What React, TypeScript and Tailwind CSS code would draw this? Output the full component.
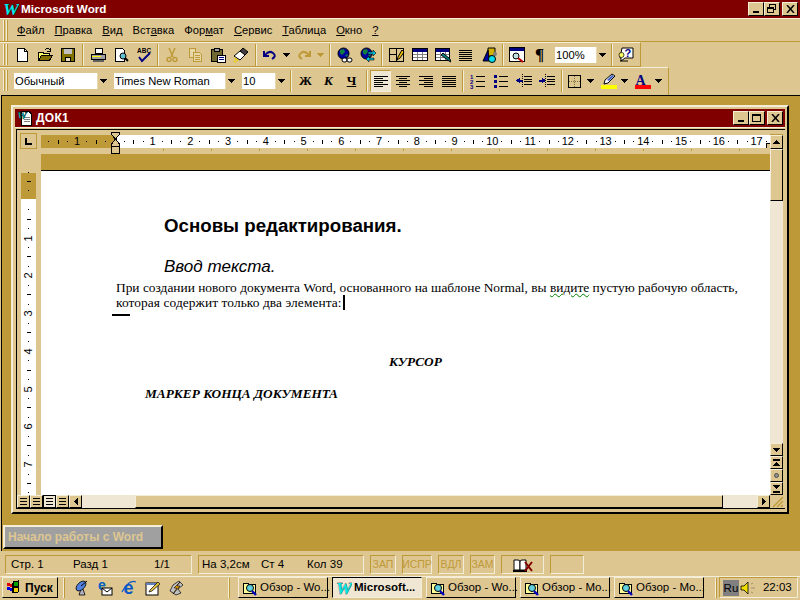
import React from "react";

type P = { children?: React.ReactNode; w?: number; h?: number; crisp?: boolean };
const S = ({ children, w = 16, h = 16, crisp = true }: P) => (
  <svg width={w} height={h} viewBox={`0 0 ${w} ${h}`} shapeRendering={crisp ? "crispEdges" : "auto"} className="block shrink-0">
    {children}
  </svg>
);
const K = "#000";
const Lines = ({ rows }: { rows: [number, number, number][] }) => (
  <S>
    {rows.map(([x, y, w], i) => (
      <rect key={i} x={x} y={y} width={w} height={1} fill={K} />
    ))}
  </S>
);

const NewDoc = () => <S><path d="M3 1.5H10.5L13.5 4.5V14.5H3.5V1.5Z" fill="#fff" stroke="#000" /><path d="M10.5 1.5V4.5H13.5" fill="none" stroke="#000" /></S>;
const OpenF = () => (
  <S>
    <path d="M1.5 5.5H6L7 6.5H12.5V13.5H1.5Z" fill="#ffff66" stroke="#000" />
    <path d="M1.5 13.5L4.5 8.5H15.5L12.5 13.5Z" fill="#847000" stroke="#000" />
    <path d="M8 3Q11 0 13 3M13 1V4H10" fill="none" stroke="#000" />
  </S>
);
const Save = () => (
  <S>
    <rect x="1.5" y="1.5" width="13" height="13" fill="#807000" stroke="#000" />
    <rect x="4" y="2" width="8" height="5" fill="#c0c0c0" />
    <rect x="5.5" y="10.5" width="5" height="4" fill="#e8e0c0" stroke="#000" />
  </S>
);
const Printer = () => (
  <S>
    <path d="M5.5 1.5H12.5V6.5H5.5Z" fill="#fff" stroke="#000" />
    <path d="M1.5 7.5H15.5V12.5H1.5Z" fill="#a0a0a0" stroke="#000" />
    <rect x="2" y="9" width="9" height="1" fill="#ffff00" />
    <rect x="3" y="13" width="11" height="2" fill="#606060" />
  </S>
);
const Preview = () => (
  <S>
    <path d="M2.5 1.5H9.5L11.5 3.5V14.5H2.5Z" fill="#fff" stroke="#000" />
    <circle cx="10" cy="9" r="3" fill="#60c0d0" stroke="#000" shapeRendering="auto" />
    <path d="M12 11L15 14" stroke="#000" strokeWidth="2" shapeRendering="auto" />
  </S>
);
const Spell = () => (
  <S>
    <text x="1" y="6" fontSize="6.5" fontWeight="700" fontFamily="Liberation Sans, sans-serif" fill="#000">ABC</text>
    <path d="M3 10L6 14L14 6" fill="none" stroke="#000080" strokeWidth="2" shapeRendering="auto" />
  </S>
);
const Cut = () => (
  <S crisp={false}>
    <path d="M5 1L9 10M11 1L7 10" stroke="#BE9938" strokeWidth="1.5" fill="none" />
    <circle cx="5" cy="12.5" r="2" fill="none" stroke="#BE9938" strokeWidth="1.4" />
    <circle cx="11" cy="12.5" r="2" fill="none" stroke="#BE9938" strokeWidth="1.4" />
  </S>
);
const Copy = () => (
  <S>
    <path d="M2.5 1.5H8.5V10.5H2.5Z" fill="#e8d8a8" stroke="#BE9938" />
    <path d="M6.5 5.5H12.5L14.5 7.5V14.5H6.5Z" fill="#e8d8a8" stroke="#BE9938" />
    <path d="M8 8.5H13M8 10.5H13M8 12.5H13" stroke="#BE9938" />
  </S>
);
const Paste = () => (
  <S>
    <rect x="1.5" y="2.5" width="11" height="12" fill="#706830" stroke="#000" />
    <rect x="4.5" y="1.5" width="5" height="3" fill="#a0a0a0" stroke="#000" />
    <path d="M7.5 8.5H15.5V15.5H7.5Z" fill="#fff" stroke="#000" />
    <rect x="9" y="10" width="5" height="1" fill="#000080" />
    <rect x="9" y="12" width="5" height="1" fill="#000080" />
  </S>
);
const Brush = () => (
  <S crisp={false}>
    <path d="M10 1L15 5L12 8L7 4Z" fill="#404040" stroke="#000" />
    <path d="M7 4L12 8L7 13L1 9Z" fill="#fff" stroke="#000" />
    <path d="M2 11L5 14M1 14L3 15" stroke="#e8d000" strokeWidth="1.5" />
  </S>
);
const Undo = ({ c = "#000080" }: { c?: string }) => (
  <S crisp={false}>
    <path d="M2 4V9H7" fill="none" stroke={c} strokeWidth="2" />
    <path d="M3 8Q7 3 11 6T10 12" fill="none" stroke={c} strokeWidth="2" />
  </S>
);
const Redo = () => (
  <S crisp={false}>
    <path d="M14 4V9H9" fill="none" stroke="#BE9938" strokeWidth="2" />
    <path d="M13 8Q9 3 5 6T6 12" fill="none" stroke="#BE9938" strokeWidth="2" />
  </S>
);
const Globe = () => (
  <>
    <circle cx="6.5" cy="6.5" r="5.5" fill="#0000a0" stroke="#000" />
    <path d="M3 3L7 2L8 5L5 8L3 6ZM8 8L11 7L10 10Z" fill="#108040" />
  </>
);
const WebLink = () => (
  <S crisp={false}>
    <Globe />
    <rect x="5" y="11" width="5" height="4" rx="2" fill="#fff" stroke="#000" />
    <rect x="10" y="11" width="5" height="4" rx="2" fill="#fff" stroke="#000" />
  </S>
);
const WebArrows = () => (
  <S crisp={false}>
    <Globe />
    <path d="M8 5H13V3L16 6L13 9V7H8Z" fill="#00c0e0" stroke="#000" strokeWidth=".6" />
    <path d="M14 11H9V9L6 12L9 15V13H14Z" fill="#00c0e0" stroke="#000" strokeWidth=".6" />
  </S>
);
const TableDraw = () => (
  <S>
    <rect x="0.5" y="1.5" width="14" height="13" fill="none" stroke="#000" />
    <path d="M7.5 1V15M1 7.5H8" stroke="#000" />
    <path d="M13 3L9 10L8 13L11 11L15 5Z" fill="#f0c000" stroke="#000" shapeRendering="auto" />
  </S>
);
const TableI = () => (
  <S>
    <rect x="0.5" y="1.5" width="15" height="12" fill="#fff" stroke="#000" />
    <rect x="1" y="2" width="14" height="3" fill="#000080" />
    <path d="M1 7.5H15M1 10.5H15M5.5 5V13M10.5 5V13" stroke="#808080" />
  </S>
);
const XlIns = () => (
  <S>
    <rect x="0.5" y="1.5" width="14" height="12" fill="#fff" stroke="#000" />
    <rect x="1" y="2" width="13" height="3" fill="#000080" />
    <path d="M1 7.5H14M1 10.5H14M5.5 5V13M10 5V13" stroke="#808080" />
    <path d="M6 8L14 14L16 15L15 12L8 6Z" fill="#008080" stroke="#000" shapeRendering="auto" />
  </S>
);
const Columns = () => (
  <Lines rows={[[1, 3, 13], [1, 5, 13], [1, 7, 13], [1, 9, 13], [1, 11, 13], [1, 13, 13]]} />
);
const Drawing = () => (
  <S crisp={false}>
    <path d="M7 1H14V9H7Z" fill="#d0b000" stroke="#000" />
    <path d="M7 3L2 14H8Z" fill="#0000a0" stroke="#000" />
    <circle cx="11" cy="12" r="3.5" fill="#00e0f0" stroke="#000" />
    <circle cx="14" cy="7" r="2" fill="#808080" />
  </S>
);
const MapI = () => (
  <S>
    <rect x="0.5" y="0.5" width="15" height="14" fill="#fff" stroke="#000" />
    <rect x="1" y="1" width="14" height="3" fill="#000080" />
    <circle cx="7" cy="9" r="3" fill="#c0e0e0" stroke="#000" shapeRendering="auto" />
    <path d="M9 11L14 15" stroke="#c00000" strokeWidth="2" shapeRendering="auto" />
  </S>
);
const Help = () => (
  <S crisp={false}>
    <path d="M4 1H15V11H7L3 14V11H2Z" fill="#fff" stroke="#000" />
    <text x="6.5" y="10" fontSize="11" fontWeight="700" fontFamily="Liberation Sans, sans-serif" fill="#000080">?</text>
    <circle cx="3.5" cy="8" r="2.5" fill="#ffff60" stroke="#000" strokeWidth=".7" />
    <path d="M2 14H10" stroke="#000" />
  </S>
);
const AlignL = () => <Lines rows={[[1, 3, 14], [1, 5, 9], [1, 7, 14], [1, 9, 9], [1, 11, 14], [1, 13, 9]]} />;
const AlignC = () => <Lines rows={[[1, 3, 14], [4, 5, 8], [1, 7, 14], [4, 9, 8], [1, 11, 14], [4, 13, 8]]} />;
const AlignR = () => <Lines rows={[[1, 3, 14], [6, 5, 9], [1, 7, 14], [6, 9, 9], [1, 11, 14], [6, 13, 9]]} />;
const AlignJ = () => <Lines rows={[[1, 3, 14], [1, 5, 14], [1, 7, 14], [1, 9, 14], [1, 11, 14], [1, 13, 14]]} />;
const Numbered = () => (
  <S>
    <text x="0" y="6" fontSize="6" fontWeight="700" fill="#000080" fontFamily="Liberation Sans, sans-serif">1</text>
    <text x="0" y="11" fontSize="6" fontWeight="700" fill="#000080" fontFamily="Liberation Sans, sans-serif">2</text>
    <text x="0" y="16" fontSize="6" fontWeight="700" fill="#000080" fontFamily="Liberation Sans, sans-serif">3</text>
    <path d="M6 3.5H15M6 8.5H15M6 13.5H15" stroke="#000" />
  </S>
);
const Bullets = () => (
  <S>
    <rect x="1" y="2" width="3" height="3" fill="#000080" />
    <rect x="1" y="7" width="3" height="3" fill="#000080" />
    <rect x="1" y="12" width="3" height="3" fill="#000080" />
    <path d="M6 3.5H15M6 8.5H15M6 13.5H15" stroke="#000" />
  </S>
);
const Outdent = () => (
  <S>
    <path d="M0 7.5L4 4.5V10.5Z" fill="#000080" />
    <path d="M4 6.5H7V8.5H4Z" fill="#000080" />
    <path d="M8 3.5H16M8 6.5H16M8 8.5H16M8 11.5H16" stroke="#000" />
    <path d="M6 1V15" stroke="#000" strokeDasharray="1 1" />
  </S>
);
const Indent = () => (
  <S>
    <path d="M7 7.5L3 4.5V10.5Z" fill="#000080" />
    <path d="M0 6.5H3V8.5H0Z" fill="#000080" />
    <path d="M8 3.5H16M8 6.5H16M8 8.5H16M8 11.5H16" stroke="#000" />
    <path d="M6 1V15" stroke="#000" strokeDasharray="1 1" />
  </S>
);
const BorderI = () => (
  <S>
    <rect x="1.5" y="2.5" width="12" height="12" fill="none" stroke="#000" />
    <path d="M7.5 3V14M2 8.5H13" stroke="#807040" strokeDasharray="1 1" />
  </S>
);
const Highlight = () => (
  <S>
    <path d="M11 1L14 3L7 10L3 11L4 7Z" fill="#fff" stroke="#000" shapeRendering="auto" />
    <path d="M11 2L13 3L8 8L6 7Z" fill="#4060c0" shapeRendering="auto" />
    <rect x="0" y="12" width="16" height="4" fill="#ffff00" />
  </S>
);
const FontColor = () => (
  <S>
    <text x="0.5" y="12" fontSize="14" fontWeight="700" fontFamily="Liberation Serif, serif" fill="#000080">A</text>
    <rect x="0" y="12" width="16" height="4" fill="#ff0000" />
  </S>
);
const FolderSearch = () => (
  <S>
    <path d="M1.5 3.5H6L7 4.5H13.5V13.5H1.5Z" fill="#ffff99" stroke="#000" />
    <circle cx="8" cy="8" r="3.5" fill="#60d0e0" stroke="#000" shapeRendering="auto" />
    <path d="M10 11L14 15" stroke="#0000c0" strokeWidth="2.4" shapeRendering="auto" />
  </S>
);
const WLogo = () => (
  <svg width="16" height="16" viewBox="0 0 16 16" className="block shrink-0">
    <text x="0" y="14" fontSize="17" fontWeight="700" fontStyle="italic" textLength="16" lengthAdjust="spacingAndGlyphs" fontFamily="Liberation Serif, serif" fill="#00e8e8" stroke="#000" strokeWidth=".5" paintOrder="stroke">W</text>
  </svg>
);
const Flag = () => (
  <S>
    <path d="M1 3L6 4V7L1 6Z" fill="#e00000" />
    <path d="M1 7L6 8V11L1 10Z" fill="#0000e0" />
    <path d="M7 2L12 1V6L7 7Z" fill="#00a000" stroke="#000" />
    <path d="M7 8L12 7V12L7 13Z" fill="#f0d000" stroke="#000" />
    <path d="M6 3V13M12 1V12" stroke="#000" />
  </S>
);
const Dish = () => (
  <S crisp={false}>
    <path d="M7 9L5 15H11L9 9Z" fill="#b0b0c0" stroke="#000" strokeWidth=".8" />
    <ellipse cx="7" cy="6" rx="6" ry="3.5" transform="rotate(-45 7 6)" fill="#5080e0" stroke="#000" strokeWidth=".8" />
    <path d="M7 6L13 1" stroke="#000" />
  </S>
);
const Mail = () => (
  <S crisp={false}>
    <text x="1" y="10" fontSize="14" fontWeight="700" fill="#0060c0" fontFamily="Liberation Sans, sans-serif">e</text>
    <rect x="5" y="8" width="10" height="7" fill="#fff" stroke="#000" />
    <path d="M5 8L10 12L15 8" fill="none" stroke="#000" />
  </S>
);
const IE = () => (
  <S crisp={false}>
    <text x="2.5" y="14" fontSize="18" fontWeight="700" fill="#0a58c8" fontFamily="Liberation Sans, sans-serif">e</text>
    <path d="M1 12Q8 -1 15 2" fill="none" stroke="#0a58c8" strokeWidth="1.2" />
  </S>
);
const Notes = () => (
  <S crisp={false}>
    <rect x="1" y="3" width="12" height="12" fill="#fff" stroke="#000" />
    <rect x="1" y="3" width="12" height="2" fill="#6080c0" />
    <path d="M13 2L5 10L4 12L7 11L15 4Z" fill="#e0c040" stroke="#000" strokeWidth=".7" />
  </S>
);
const Bolt = () => (
  <S crisp={false}>
    <path d="M5 5L11 1L15 5L10 9L13 13L8 15L2 11Z" fill="#c0c0c0" stroke="#000" strokeWidth=".7" />
    <path d="M12 2L6 8H9L5 14L12 6H9Z" fill="#f0a000" stroke="#000" strokeWidth=".6" />
  </S>
);
const Speaker = () => (
  <S crisp={false}>
    <path d="M1 6H4L8 2V14L4 10H1Z" fill="#f0e000" stroke="#000" strokeWidth=".8" />
    <path d="M11 4L13 3M11 8H15M11 12L13 13" stroke="#a09070" />
  </S>
);
const BookX = () => (
  <svg width="22" height="16" viewBox="0 0 22 16" className="block">
    <path d="M2 3H6Q8 3 8 5V13H2Z" fill="#fff" stroke="#000" />
    <path d="M8 5Q8 3 10 3H14V13H8Z" fill="#fff" stroke="#000" />
    <path d="M1 14H15" stroke="#000" strokeWidth="2" />
    <path d="M13 5L20 14M20 5L13 14" stroke="#800000" strokeWidth="2" />
  </svg>
);
const Hourglass = () => (
  <svg width="10" height="22" viewBox="0 0 10 22" shapeRendering="crispEdges" className="block">
    <path d="M.5 .5H8.5V2.5L4.5 7L8.5 12V14.5H.5V12L4.5 7L.5 2.5Z" fill="#DEC691" stroke="#000" />
    <rect x=".5" y="14.5" width="8" height="6.5" fill="#DEC691" stroke="#000" />
  </svg>
);

const bevel = "border border-t-[#F4EDD8] border-l-[#F4EDD8] border-r-black border-b-black";

const Arrow = ({ c = "#000" }: { c?: string }) => (
  <svg width="7" height="4" viewBox="0 0 7 4" shapeRendering="crispEdges" className="block">
    <path d="M0 0H7L3.5 4Z" fill={c} />
  </svg>
);

const Tb = ({ children, w = "w-[23px]" }: { children?: React.ReactNode; w?: string }) => (
  <div className={`${w} h-[22px] shrink-0 flex items-center justify-center`}>{children}</div>
);
const Sep = ({ w = "w-[7px]" }: { w?: string }) => (
  <div className={`${w} h-[22px] shrink-0 flex justify-center`}>
    <div className="w-[2px] h-full bg-[#BE9938] border-r border-[#F4EDD8]" />
  </div>
);
const Handle = () => (
  <div className="flex gap-px ml-[3px] mr-[2px] h-[21px] shrink-0">
    <div className="w-[2px] bg-[#F4EDD8] border-r border-[#BE9938]" />
    <div className="w-[2px] bg-[#F4EDD8] border-r border-[#BE9938]" />
  </div>
);

const Combo = ({ text, w }: { text: string; w: string }) => (
  <div className={`${w} h-[18px] shrink-0 flex bg-white border border-[#DEC691]`}>
    <span className="flex-1 min-w-0 pl-[1px] text-[11.2px] leading-[16px] text-black whitespace-nowrap">{text}</span>
    <div className="w-[11px] shrink-0 bg-[#DEC691] flex items-center justify-center border-l border-[#E8D8B0]">
      <Arrow />
    </div>
  </div>
);

const WinBtn = ({ children }: { children?: React.ReactNode }) => (
  <div className={`w-[16px] h-[14px] bg-[#DEC691] ${bevel} flex items-center justify-center shrink-0`}>{children}</div>
);
const MinG = () => <svg width="8" height="8" shapeRendering="crispEdges"><rect x="1" y="6" width="6" height="2" fill="#000" /></svg>;
const MaxG = () => <svg width="10" height="9" shapeRendering="crispEdges"><rect x=".5" y=".5" width="8" height="7" fill="none" stroke="#000" /><rect x="1" y="1" width="7" height="1" fill="#000" /></svg>;
const RestG = () => <svg width="10" height="10" shapeRendering="crispEdges"><rect x="2.5" y=".5" width="6" height="5" fill="none" stroke="#000" /><rect x=".5" y="3.5" width="6" height="5" fill="#DEC691" stroke="#000" /><rect x="1" y="4" width="5" height="1" fill="#000" /></svg>;
const CloseG = () => <svg width="9" height="8" viewBox="0 0 9 8"><path d="M1 0L8 8M8 0L1 8" stroke="#000" strokeWidth="1.5" /></svg>;

const ScrollBtn = ({ children, h = "h-[13px]" }: { children?: React.ReactNode; h?: string }) => (
  <div className={`w-[13px] ${h} shrink-0 bg-[#DEC691] ${bevel} flex items-center justify-center`}>{children}</div>
);
const Tri = ({ d }: { d: "u" | "d" | "l" | "r" }) => {
  const p = { u: "M0 4H7L3.5 0Z", d: "M0 0H7L3.5 4Z", l: "M4 0V7L0 3.5Z", r: "M0 0V7L4 3.5Z" }[d];
  const dim = d === "u" || d === "d" ? { w: 7, h: 4 } : { w: 4, h: 7 };
  return <svg width={dim.w} height={dim.h} shapeRendering="crispEdges" className="block"><path d={p} fill="#000" /></svg>;
};
const DblTri = ({ up }: { up?: boolean }) => (
  <svg width="7" height="8" shapeRendering="crispEdges" className="block">
    <path d={up ? "M0 7H7L3.5 3Z" : "M0 0H7L3.5 4Z"} fill="#000" />
    <rect x="0" y={up ? 0 : 6} width="7" height="2" fill="#000" />
  </svg>
);
const ViewGlyph = () => (
  <svg width="7" height="7" shapeRendering="crispEdges" className="block">
    <path d="M0 .5H7M0 3.5H7M0 6.5H7" stroke="#000" />
  </svg>
);

const hSlots = Array.from({ length: 78 }, (_, i) => i - 7);
const vSlots = Array.from({ length: 35 }, (_, i) => i - 3);
const tabs = Array.from({ length: 13 });

const StatusCell = ({ w, children, dim }: { w: string; children?: React.ReactNode; dim?: boolean }) => (
  <div className={`${w} h-[19px] shrink-0 flex items-center border border-[#BE9938] border-r-[#F4EDD8] border-b-[#F4EDD8] ${dim ? "text-[10.5px] text-[#BE9938] justify-center" : "text-[11.5px] text-black"}`}>
    {children}
  </div>
);
const TaskBtn = ({ label }: { label: string }) => (
  <div className={`w-[90px] h-[21px] shrink-0 flex items-center gap-[2px] pl-[3px] bg-[#DEC691] ${bevel} text-[11.5px] text-black whitespace-nowrap`}>
    <FolderSearch />
    <span>{label}</span>
  </div>
);

export default function App() {
  return (
    <div className="w-[800px] h-[600px] overflow-hidden flex flex-col bg-[#DEC691] text-black font-['Liberation_Sans',sans-serif] select-none">
      {/* Title */}
      <div className="h-[18px] shrink-0 bg-[#800000] flex items-center pl-[3px] pr-[2px]">
        <WLogo />
        <span className="ml-[2px] text-white font-bold text-[11.7px] flex-1">Microsoft Word</span>
        <WinBtn><MinG /></WinBtn>
        <WinBtn><RestG /></WinBtn>
        <div className="w-[2px]" />
        <WinBtn><CloseG /></WinBtn>
      </div>
      {/* Menu */}
      <div className="h-[24px] shrink-0 border-t border-t-[#F4EDD8] border-b border-b-[#BE9938] flex items-center">
        <Handle />
        <div className="flex gap-[10px] ml-[7px] text-[11.2px] text-black">
          <span><u>Ф</u>айл</span>
          <span><u>П</u>равка</span>
          <span><u>В</u>ид</span>
          <span>Вст<u>а</u>вка</span>
          <span>Фор<u>м</u>ат</span>
          <span><u>С</u>ервис</span>
          <span><u>Т</u>аблица</span>
          <span><u>О</u>кно</span>
          <span><u>?</u></span>
        </div>
      </div>
      {/* Standard toolbar */}
      <div className="h-[25px] shrink-0 flex">
        <div className="w-[641px] border-t border-t-[#F4EDD8] border-r border-r-[#BE9938] border-b border-b-[#BE9938] flex items-center">
          <Handle />
          <Tb><NewDoc /></Tb><Tb><OpenF /></Tb><Tb><Save /></Tb>
          <Sep />
          <Tb><Printer /></Tb><Tb><Preview /></Tb><Tb><Spell /></Tb>
          <Sep w="w-[5px]" />
          <Tb><Cut /></Tb><Tb><Copy /></Tb><Tb><Paste /></Tb><Tb><Brush /></Tb>
          <Sep />
          <Tb w="w-[22px]"><Undo /></Tb><Tb w="w-[10px]"><Arrow /></Tb>
          <div className="w-[2px]" />
          <Tb w="w-[22px]"><Redo /></Tb><Tb w="w-[11px]"><Arrow c="#BE9938" /></Tb>
          <Sep />
          <Tb><WebLink /></Tb><Tb><WebArrows /></Tb>
          <Sep w="w-[6px]" />
          <Tb><TableDraw /></Tb><Tb><TableI /></Tb><Tb><XlIns /></Tb><Tb><Columns /></Tb><Tb><Drawing /></Tb>
          <Sep w="w-[6px]" />
          <Tb w="w-[22px]"><MapI /></Tb>
          <Tb><span className="font-['Liberation_Serif',serif] font-bold text-[17px] leading-none">¶</span></Tb>
          <div className="w-[3px]" />
          <Combo text="100%" w="w-[54px]" />
          <Sep />
          <Tb w="w-[22px]"><Help /></Tb>
        </div>
      </div>
      {/* Formatting toolbar */}
      <div className="h-[28px] shrink-0 flex">
        <div className="w-[669px] border-t border-t-[#F4EDD8] border-r border-r-[#BE9938] flex items-center pb-[2px]">
          <Handle />
          <div className="w-[3px]" />
          <Combo text="Обычный" w="w-[96px]" />
          <div className="w-[4px]" />
          <Combo text="Times New Roman" w="w-[124px]" />
          <div className="w-[4px]" />
          <Combo text="10" w="w-[46px]" />
          <Sep />
          <Tb><span className="font-['Liberation_Serif',serif] font-bold text-[13px]">Ж</span></Tb>
          <Tb><span className="font-['Liberation_Serif',serif] font-bold italic text-[13px]">К</span></Tb>
          <Tb><span className="font-['Liberation_Serif',serif] font-bold underline text-[13px]">Ч</span></Tb>
          <Sep />
          <div className="w-[21px] h-[22px] shrink-0 flex items-center justify-center bg-[#EFE7D3] border border-t-[#BE9938] border-l-[#BE9938] border-r-[#F4EDD8] border-b-[#F4EDD8]"><AlignL /></div>
          <Tb><AlignC /></Tb><Tb><AlignR /></Tb><Tb><AlignJ /></Tb>
          <Sep w="w-[6px]" />
          <Tb><Numbered /></Tb><Tb><Bullets /></Tb><Tb><Outdent /></Tb><Tb><Indent /></Tb>
          <Sep />
          <Tb w="w-[20px]"><BorderI /></Tb><Tb w="w-[11px]"><Arrow /></Tb>
          <div className="w-[3px]" />
          <Tb w="w-[20px]"><Highlight /></Tb><Tb w="w-[11px]"><Arrow /></Tb>
          <div className="w-[3px]" />
          <Tb w="w-[20px]"><FontColor /></Tb><Tb w="w-[11px]"><Arrow /></Tb>
        </div>
      </div>
      {/* MDI */}
      <div className="flex-1 min-h-0 ml-[1px] bg-[#BE9938] border-t border-l border-black flex flex-col">
        {/* Document window */}
        <div className="ml-[9px] mt-[9px] w-[778px] h-[409px] shrink-0 bg-[#DEC691] border-2 border-t-[#F4EDD8] border-l-[#F4EDD8] border-r-black border-b-black p-[2px] flex flex-col">
          <div className="h-[18px] shrink-0 bg-[#800000] flex items-center pl-[2px] pr-[2px]">
            <div className="relative w-[16px] h-[16px] shrink-0 mr-[3px]">
              <svg width="16" height="16" shapeRendering="crispEdges" className="block"><path d="M4.5 1.5H12L14.5 4V15.5H4.5Z" fill="#fff" stroke="#000" /><path d="M7 7.5H13M7 9.5H13M7 11.5H13" stroke="#808080" /></svg>
              <svg width="12" height="10" viewBox="0 0 12 10" className="absolute left-0 top-0"><text x="0" y="9" fontSize="11" fontWeight="700" fontStyle="italic" fontFamily="Liberation Serif, serif" fill="#00d8d8" stroke="#000" strokeWidth=".4">W</text></svg>
            </div>
            <span className="flex-1 text-white font-bold text-[12px] tracking-[0.3px]">ДОК1</span>
            <WinBtn><MinG /></WinBtn>
            <WinBtn><MaxG /></WinBtn>
            <div className="w-[2px]" />
            <WinBtn><CloseG /></WinBtn>
          </div>
          <div className="h-[2px] shrink-0 border-t border-[#F4EDD8]" />
          {/* Client */}
          <div className="flex-1 min-h-0 ml-[1px] border-t border-l border-b border-black mb-[1px] flex flex-col">
            <div className="flex-1 min-h-0 flex">
              <div className="flex-1 min-w-0 flex flex-col">
                {/* Ruler rows */}
                <div className="h-[24px] shrink-0 flex relative">
                  <div className="w-[24px] shrink-0 pl-[3px] pt-[3px]">
                    <div className="w-[17px] h-[16px] border border-[#BE9938] bg-[#DEC691] flex items-center justify-center">
                      <div className="w-[7px] h-[7px] border-l-2 border-b-2 border-black" />
                    </div>
                  </div>
                  <div className="flex-1 min-w-0 flex flex-col pt-[5px]">
                    <div className="h-[13px] shrink-0 overflow-hidden flex pl-[3.1px] bg-[linear-gradient(to_right,#BE9938_74px,#ffffff_74px)]">
                      {hSlots.map(i => (
                        <div key={i} className="w-[9.45px] h-[13px] shrink-0 flex items-center justify-center">
                          {i % 4 === 0 ? (
                            i !== 0 && <span className="text-[11px] leading-none text-black">{Math.abs(i / 4)}</span>
                          ) : i % 2 === 0 ? (
                            <div className="w-px h-[4px] bg-black" />
                          ) : (
                            <div className="w-px h-px bg-black" />
                          )}
                        </div>
                      ))}
                    </div>
                    <div className="h-[6px] shrink-0 overflow-hidden flex pl-[122px]">
                      {tabs.map((_, i) => (
                        <div key={i} className="w-[48px] shrink-0 h-[2px] mt-px">
                          <div className="w-px h-[2px] bg-[#BE9938]" />
                        </div>
                      ))}
                    </div>
                  </div>
                  <div className="absolute left-[94px] top-[2px]"><Hourglass /></div>
                  <div className="absolute right-0 top-[13px] w-[4px] h-[5px] bg-[#DEC691] border-l border-t border-black" />
                </div>
                <div className="h-[17px] shrink-0 flex">
                  <div className="w-[24px] shrink-0" />
                  <div className="flex-1 bg-[#BE9938] border-b border-black" />
                </div>
                {/* Body */}
                <div className="flex-1 min-h-0 flex">
                  <div className="w-[24px] shrink-0 pl-[4px] overflow-hidden">
                    <div className="w-[15px] h-full overflow-hidden bg-[linear-gradient(to_bottom,#DEC691_2px,#BE9938_2px,#BE9938_28px,#ffffff_28px)]">
                      <div className="flex flex-col -mt-[3.7px]">
                        {vSlots.map(i => (
                          <div key={i} className="w-[15px] h-[9.45px] shrink-0 flex items-center justify-center">
                            {i % 4 === 0 ? (
                              i !== 0 && <span className="text-[11px] leading-none text-black -rotate-90">{i / 4}</span>
                            ) : i % 2 === 0 ? (
                              <div className="w-[4px] h-px bg-black" />
                            ) : (
                              <div className="w-px h-px bg-black" />
                            )}
                          </div>
                        ))}
                      </div>
                    </div>
                  </div>
                  <div className="flex-1 min-w-0 bg-white flex flex-col font-['Liberation_Serif',serif] text-black overflow-hidden">
                    <div className="mt-[44px] ml-[123px] h-[22px] leading-[22px] text-[18.7px] font-bold font-['Liberation_Sans',sans-serif] whitespace-nowrap">Основы редактирования.</div>
                    <div className="mt-[20px] ml-[123px] h-[20px] leading-[20px] text-[17px] italic font-['Liberation_Sans',sans-serif] whitespace-nowrap">Ввод текста.</div>
                    <div className="mt-[3px] ml-[75px] h-[15px] leading-[15px] text-[13.4px] whitespace-nowrap">
                      При создании нового документа Word, основанного на шаблоне Normal, вы <span className="underline decoration-wavy decoration-[#008000] decoration-1">видите</span> пустую рабочую область,
                    </div>
                    <div className="ml-[75px] h-[15px] leading-[15px] text-[13.4px] tracking-[0.08px] whitespace-nowrap flex items-center">
                      которая содержит только два элемента:<span className="inline-block ml-[1px] w-[2px] h-[15px] bg-black" />
                    </div>
                    <div className="ml-[71px] mt-[4px] w-[18px] h-[2px] bg-black shrink-0" />
                    <div className="mt-[38px] ml-[348px] h-[15px] leading-[15px] text-[13.3px] font-bold italic whitespace-nowrap">КУРСОР</div>
                    <div className="mt-[17px] ml-[104px] h-[15px] leading-[15px] text-[13.3px] font-bold italic whitespace-nowrap">МАРКЕР КОНЦА ДОКУМЕНТА</div>
                  </div>
                </div>
              </div>
              {/* Vertical scrollbar */}
              <div className="w-[15px] shrink-0 flex flex-col pr-[2px]">
                <div className="h-[5px] shrink-0 border-b border-[#BE9938]" />
                <ScrollBtn h="h-[14px]"><Tri d="u" /></ScrollBtn>
                <ScrollBtn h="h-[52px]" />
                <div className="flex-1 min-h-0 w-[13px] bg-[#EFE7D3]" />
                <ScrollBtn><Tri d="d" /></ScrollBtn>
                <ScrollBtn><DblTri up /></ScrollBtn>
                <ScrollBtn><div className="w-[5px] h-[5px] rounded-full bg-[#909090] border border-[#505050]" /></ScrollBtn>
                <ScrollBtn><DblTri /></ScrollBtn>
              </div>
            </div>
            {/* Horizontal scrollbar */}
            <div className="h-[13px] shrink-0 flex">
              <div className={`w-[13px] h-[13px] shrink-0 bg-[#DEC691] ${bevel} flex items-center justify-center`}><ViewGlyph /></div>
              <div className={`w-[13px] h-[13px] shrink-0 bg-[#DEC691] ${bevel} flex items-center justify-center`}><ViewGlyph /></div>
              <div className="w-[13px] h-[13px] shrink-0 bg-[#EFE7D3] border border-black flex items-center justify-center"><ViewGlyph /></div>
              <div className={`w-[13px] h-[13px] shrink-0 bg-[#DEC691] ${bevel} flex items-center justify-center`}><ViewGlyph /></div>
              <ScrollBtn><Tri d="l" /></ScrollBtn>
              <div className="w-[53px] shrink-0 bg-[#EFE7D3]" />
              <div className={`w-[588px] shrink-0 bg-[#DEC691] ${bevel}`} />
              <div className="w-[34px] shrink-0 bg-[#EFE7D3]" />
              <ScrollBtn><Tri d="r" /></ScrollBtn>
              <div className="flex-1 flex items-end justify-end pr-px">
                <svg width="12" height="12" viewBox="0 0 12 12"><path d="M11 1L1 11M11 5L5 11M11 9L9 11" stroke="#BE9938" strokeWidth="1.4" /></svg>
              </div>
            </div>
          </div>
        </div>
        <div className="flex-1" />
        <div className="ml-[1px] mb-[2px] w-[160px] h-[24px] shrink-0 bg-[#a0a0a0] border-2 border-t-[#F4EDD8] border-l-[#F4EDD8] border-r-black border-b-black flex items-center pl-[3px] text-[#DEC691] font-bold text-[12px]">
          Начало работы с Word
        </div>
      </div>
      {/* Status bar */}
      <div className="h-[25px] shrink-0 flex items-center gap-[6px] pl-[5px] pt-[2px]">
        <StatusCell w="w-[187px]">
          <span className="w-[67px] pl-[5px]">Стр. 1</span>
          <span className="w-[81px]">Разд 1</span>
          <span>1/1</span>
        </StatusCell>
        <StatusCell w="w-[166px]">
          <span className="w-[62px] pl-[3px]">На 3,2см</span>
          <span className="w-[46px]">Ст 4</span>
          <span>Кол 39</span>
        </StatusCell>
        <StatusCell w="w-[26px]" dim>ЗАП</StatusCell>
        <StatusCell w="w-[30px]" dim>ИСПР</StatusCell>
        <StatusCell w="w-[26px]" dim>ВДЛ</StatusCell>
        <StatusCell w="w-[25px]" dim>ЗАМ</StatusCell>
        <StatusCell w="w-[43px]"><div className="pl-[10px]"><BookX /></div></StatusCell>
        <StatusCell w="w-[34px]" />
      </div>
      {/* Taskbar */}
      <div className="h-[24px] shrink-0 flex items-center pl-[2px] pb-[2px] border-t border-t-[#F4EDD8]">
        <div className={`w-[56px] h-[21px] shrink-0 flex items-center gap-[3px] pl-[3px] bg-[#DEC691] ${bevel} text-[12px] font-bold`}>
          <Flag />
          <span>Пуск</span>
        </div>
        <div className="ml-[5px] w-[2px] h-[20px] bg-[#F4EDD8] border-r border-[#BE9938] shrink-0" />
        <div className="flex ml-[5px]">
          <Tb w="w-[23.6px]"><Dish /></Tb>
          <Tb w="w-[23.6px]"><Mail /></Tb>
          <Tb w="w-[23.6px]"><IE /></Tb>
          <Tb w="w-[23.6px]"><Notes /></Tb>
          <Tb w="w-[23.6px]"><Bolt /></Tb>
        </div>
        <div className="ml-[40px] w-[2px] h-[20px] bg-[#F4EDD8] border-r border-[#BE9938] shrink-0" />
        <div className="ml-[8px] flex gap-[4px]">
          <TaskBtn label="Обзор - Wo..." />
          <div className="w-[90px] h-[21px] shrink-0 flex items-center gap-[2px] pl-[3px] bg-[#EFE7D3] border border-t-black border-l-black border-r-[#F4EDD8] border-b-[#F4EDD8] text-[11.5px] font-bold whitespace-nowrap">
            <WLogo />
            <span>Microsoft...</span>
          </div>
          <TaskBtn label="Обзор - Wo..." />
          <TaskBtn label="Обзор - Mo..." />
          <TaskBtn label="Обзор - Mo..." />
        </div>
        <div className="ml-[11px] w-[2px] h-[20px] bg-[#F4EDD8] border-r border-[#BE9938] shrink-0" />
        <div className="ml-[2px] w-[79px] h-[21px] shrink-0 flex items-center pl-[3px] border border-t-[#BE9938] border-l-[#BE9938] border-r-[#F4EDD8] border-b-[#F4EDD8] text-[11.5px]">
          <span className="w-[16px] h-[16px] bg-[#808080] leading-[16px] text-center text-black">Ru</span>
          <div className="ml-[1px]"><Speaker /></div>
          <span className="ml-[7px]">22:03</span>
        </div>
      </div>
    </div>
  );
}
